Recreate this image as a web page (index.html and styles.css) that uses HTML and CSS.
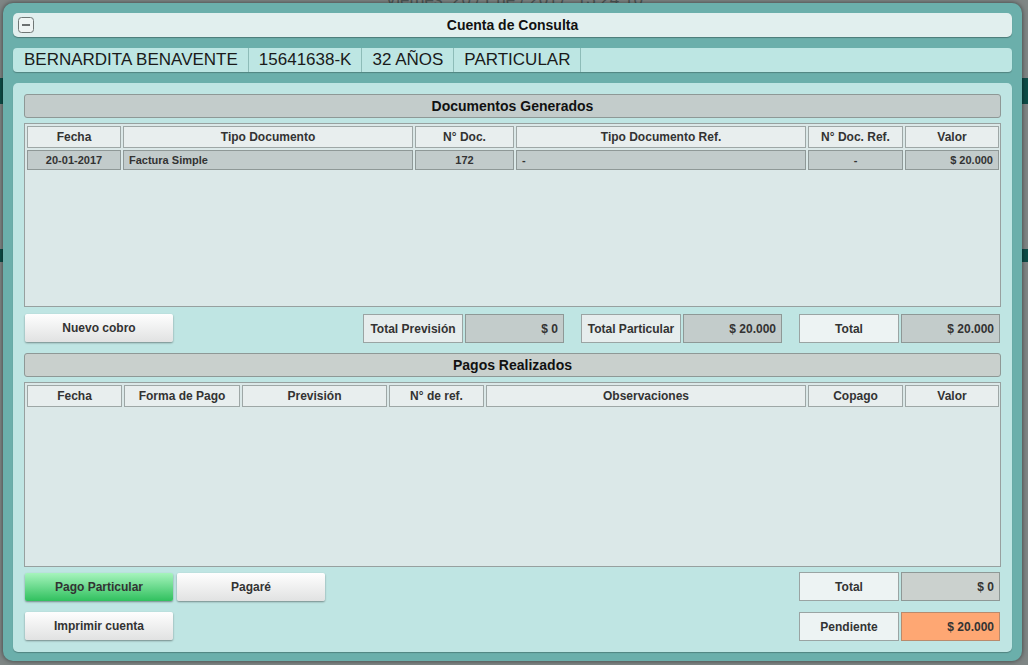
FILE: index.html
```html
<!DOCTYPE html>
<html lang="es">
<head>
<meta charset="utf-8">
<title>Cuenta de Consulta</title>
<link rel="stylesheet" href="styles.css">
</head>
<body>
<div class="page">
  <div class="page-date">Viernes, 20 / Ene / 2017, 13:24:10</div>
  <div class="page-band band-1"></div>
  <div class="page-band band-2"></div>
</div>

<div class="modal">
  <div class="titlebar">
    <span class="min-btn">
      <svg width="16" height="16" viewBox="0 0 16 16"><rect x="0.5" y="0.5" width="15" height="15" rx="3" fill="#eef4f3" stroke="#6f7775"/><line x1="4" y1="8" x2="12" y2="8" stroke="#4a4f4e" stroke-width="1.6"/></svg>
    </span>
    <span class="title">Cuenta de Consulta</span>
    <span></span>
  </div>

  <div class="patient">
    <span class="pcell">BERNARDITA BENAVENTE</span>
    <span class="pcell">15641638-K</span>
    <span class="pcell">32 AÑOS</span>
    <span class="pcell">PARTICULAR</span>
  </div>

  <div class="panel">
    <div class="sec-head">Documentos Generados</div>
    <div class="grid-table docs">
      <div class="th">Fecha</div>
      <div class="th">Tipo Documento</div>
      <div class="th">N° Doc.</div>
      <div class="th">Tipo Documento Ref.</div>
      <div class="th">N° Doc. Ref.</div>
      <div class="th">Valor</div>
      <div class="td c">20-01-2017</div>
      <div class="td l">Factura Simple</div>
      <div class="td c">172</div>
      <div class="td l">-</div>
      <div class="td c">-</div>
      <div class="td r">$ 20.000</div>
    </div>

    <div class="row row-mid">
      <button class="btn">Nuevo cobro</button>
      <div class="totals">
        <div class="pair"><span class="lbl">Total Previsión</span><span class="val">$ 0</span></div>
        <div class="pair"><span class="lbl">Total Particular</span><span class="val">$ 20.000</span></div>
        <div class="pair"><span class="lbl lbl-light">Total</span><span class="val">$ 20.000</span></div>
      </div>
    </div>

    <div class="sec-head sec-light">Pagos Realizados</div>
    <div class="grid-table pagos">
      <div class="th">Fecha</div>
      <div class="th">Forma de Pago</div>
      <div class="th">Previsión</div>
      <div class="th">N° de ref.</div>
      <div class="th">Observaciones</div>
      <div class="th">Copago</div>
      <div class="th">Valor</div>
    </div>

    <div class="row row-pay">
      <div class="btns">
        <button class="btn btn-green">Pago Particular</button>
        <button class="btn">Pagaré</button>
      </div>
      <div class="pair"><span class="lbl lbl-light">Total</span><span class="val val-gray">$ 0</span></div>
    </div>

    <div class="row row-last">
      <button class="btn">Imprimir cuenta</button>
      <div class="pair"><span class="lbl lbl-light">Pendiente</span><span class="val val-orange">$ 20.000</span></div>
    </div>
  </div>
</div>
</body>
</html>
```

FILE: styles.css
```css
* { box-sizing: border-box; }

html, body {
  margin: 0;
  padding: 0;
  width: 1028px;
  height: 665px;
  overflow: hidden;
}

body {
  background: #7f8685;
  font-family: "Liberation Sans", Arial, sans-serif;
  color: #222;
  position: relative;
}

/* background page (dimmed behind the overlay) */
.page {
  display: flex;
  flex-direction: column;
}
.page-date {
  height: 12px;
  margin-top: -9px;
  text-align: center;
  font-size: 17px;
  line-height: 17px;
  color: #4e5756;
}
.page-band {
  height: 26px;
  background: #0e4d48;
}
.band-1 { margin-top: 75px; }
.band-2 { margin-top: 145px; height: 13px; }

/* modal */
.modal {
  position: absolute;
  left: 3px;
  top: 3px;
  width: 1019px;
  height: 658px;
  padding: 10px;
  background: #6bafab;
  border-radius: 10px;
  box-shadow: 0 0 5px rgba(0, 0, 0, 0.55);
  display: flex;
  flex-direction: column;
  gap: 11px;
}

.titlebar {
  height: 24px;
  flex: none;
  background: #e1efee;
  border-radius: 5px;
  box-shadow: 0 1px 1px rgba(0, 0, 0, 0.3);
  display: grid;
  grid-template-columns: 1fr auto 1fr;
  align-items: center;
}
.min-btn {
  display: flex;
  padding-left: 5px;
}
.min-btn svg { display: block; }
.title {
  font-size: 14px;
  font-weight: bold;
  color: #111;
}

.patient {
  height: 24px;
  flex: none;
  background: #bde6e3;
  border-radius: 4px;
  box-shadow: 0 1px 1px rgba(0, 0, 0, 0.25);
  display: flex;
  align-items: stretch;
}
.pcell {
  display: flex;
  align-items: center;
  padding: 0 10px 0 10px;
  border-right: 1px solid #8dbcb8;
  font-size: 17px;
  color: #1a1a1a;
}
.pcell:first-child { padding-left: 11px; }

.panel {
  flex: 1;
  background: #bfe5e3;
  border-radius: 5px;
  box-shadow: 0 1px 1px rgba(0, 0, 0, 0.25);
  padding: 11px;
  display: flex;
  flex-direction: column;
}

.sec-head {
  height: 24px;
  flex: none;
  background: #c3cccb;
  border: 1px solid #8e9896;
  border-radius: 3px;
  display: flex;
  align-items: center;
  justify-content: center;
  font-size: 14px;
  font-weight: bold;
  color: #111;
}
.sec-light { background: #c9d0cd; margin-top: 10px; }

.grid-table {
  flex: none;
  margin-top: 5px;
  border: 1px solid #97a09f;
  background: #dbe8e8;
  padding: 2px;
  display: grid;
  gap: 2px;
  align-content: start;
  grid-auto-rows: 20px;
}
.docs {
  height: 184px;
  grid-template-columns: 94px 290px 99px 290px 95px 94px;
  grid-template-rows: 22px 20px;
}
.pagos {
  height: 185px;
  grid-template-columns: 95px 116px 145px 95px 320px 95px 94px;
  grid-template-rows: 22px;
}

.th {
  background: #e8eeee;
  border: 1px solid #9ea7a6;
  display: flex;
  align-items: center;
  justify-content: center;
  font-size: 12px;
  font-weight: bold;
  color: #333;
}
.td {
  background: #c2cbcb;
  border: 1px solid #8f9897;
  display: flex;
  align-items: center;
  font-size: 11px;
  font-weight: bold;
  color: #333;
  padding: 0 5px;
}
.td.c { justify-content: center; }
.td.l { justify-content: flex-start; }
.td.r { justify-content: flex-end; }

.row {
  flex: none;
  display: flex;
  align-items: flex-start;
  justify-content: space-between;
  padding-right: 1px;
}
.row-mid { margin-top: 7px; height: 29px; }
.row-pay { margin-top: 5px; height: 29px; }
.row-last { margin-top: 11px; height: 29px; }

.btns { display: flex; gap: 4px; }

.btn {
  width: 148px;
  height: 28px;
  margin: 0 0 0 1px;
  border: none;
  border-radius: 2px;
  background: linear-gradient(#fefefe, #e1e2e2);
  box-shadow: 0 1px 2px rgba(0, 0, 0, 0.4);
  font-family: "Liberation Sans", Arial, sans-serif;
  font-size: 12px;
  font-weight: bold;
  color: #333;
  padding: 0;
}
.row-pay .btn { margin-top: 1px; }
.btns .btn + .btn { margin-left: 0; }
.btn-green {
  background: linear-gradient(#a6f4bd, #30c05e);
}

.totals {
  display: flex;
  gap: 17px;
}
.pair {
  display: flex;
  gap: 2px;
  height: 29px;
}
.lbl {
  width: 100px;
  background: #e6eded;
  border: 1px solid #9aa4a3;
  display: flex;
  align-items: center;
  justify-content: center;
  font-size: 12px;
  font-weight: bold;
  color: #333;
}
.lbl-light { background: #edf3f3; }
.val {
  width: 99px;
  background: #c3cccb;
  border: 1px solid #8e9896;
  display: flex;
  align-items: center;
  justify-content: flex-end;
  padding-right: 5px;
  font-size: 12px;
  font-weight: bold;
  color: #333;
}
.val-gray { background: #cbd1ce; }
.val-orange { background: #fea773; border-color: #b98a6c; }
```
